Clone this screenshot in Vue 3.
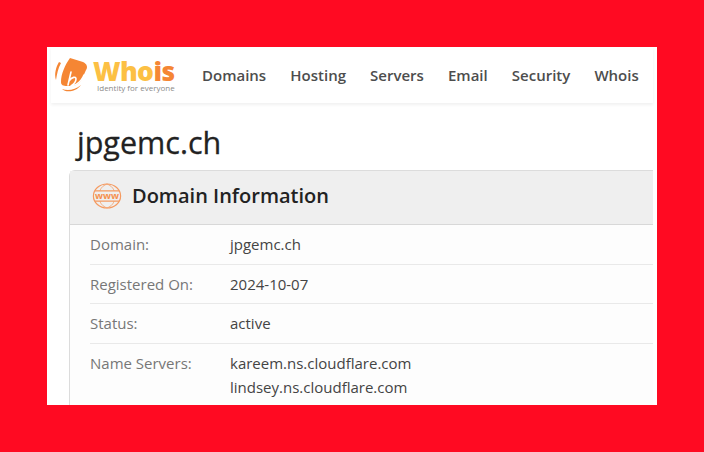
<template>
  <div class="page">
    <div class="shot">
      <header class="topbar">
        <div class="logo">
          <svg class="logo-mark" width="36" height="36" viewBox="0 0 36 36">
            <path d="M6 5 C3 10 1 17 3 23 C4 17 5 11 8 6 Z" fill="#f58634" />
            <path d="M17 1 L30 5 C34 7 35 10 33 13 L29 22 C26 28 20 30 14 29 C10 29 8 28 8 25 C8 17 12 8 17 1 Z" fill="#f58634" />
            <path d="M18 15 L15 28 M16 24 C19 20 23 19 23 22 C23 25 21 27 18 29 M31 18 C28 26 20 31 10 30" fill="none" stroke="#fff" stroke-width="1.6" stroke-linecap="round" />
            <path d="M9 32 C15 34 22 33 28 28 C23 35 13 36 9 32 Z" fill="#f58634" />
          </svg>
          <div class="logo-text">
            <div class="logo-name"><span class="who">Who</span><span class="is">is</span></div>
            <div class="logo-tag">Identity for everyone</div>
          </div>
        </div>
        <nav class="nav">
          <a v-for="item in navItems" :key="item">{{ item }}</a>
        </nav>
      </header>

      <h1 class="domain-title">jpgemc.ch</h1>

      <section class="card">
        <div class="card-head">
          <svg class="www" width="30" height="26" viewBox="0 0 30 26" fill="none" stroke="#f59a60" stroke-width="1.2">
            <ellipse cx="15" cy="13" rx="13.6" ry="12" />
            <path d="M3 7.8 H27 M3 18.2 H27" />
            <path d="M15 1 C10 3 8.5 6 8 7.8 M15 1 C20 3 21.5 6 22 7.8 M15 25 C10 23 8.5 20 8 18.2 M15 25 C20 23 21.5 20 22 18.2" stroke-width="0.8" />
            <text x="15" y="16" text-anchor="middle" textLength="24" lengthAdjust="spacingAndGlyphs" class="www-text">www</text>
          </svg>
          <h2>Domain Information</h2>
        </div>
        <div class="rows">
          <div v-for="row in rows" :key="row.label" class="row">
            <div class="label">{{ row.label }}</div>
            <div class="value">
              <div v-for="line in row.lines" :key="line">{{ line }}</div>
            </div>
          </div>
        </div>
      </section>
    </div>
  </div>
</template>

<script setup>
const navItems = ['Domains', 'Hosting', 'Servers', 'Email', 'Security', 'Whois'];

const rows = [
  { label: 'Domain:', lines: ['jpgemc.ch'] },
  { label: 'Registered On:', lines: ['2024-10-07'] },
  { label: 'Status:', lines: ['active'] },
  { label: 'Name Servers:', lines: ['kareem.ns.cloudflare.com', 'lindsey.ns.cloudflare.com'] }
];
</script>

<style>
html,
body {
  margin: 0;
  background: #ff0a22;
}
</style>

<style scoped>
.page {
  width: 704px;
  height: 452px;
  padding: 47px;
  box-sizing: border-box;
  background: #ff0a22;
  overflow: hidden;
  font-family: "Open Sans", "Noto Sans", sans-serif;
}

.shot {
  width: 610px;
  height: 358px;
  background: #fff;
  overflow: hidden;
  padding-right: 4px;
  box-sizing: border-box;
}

.topbar {
  display: flex;
  align-items: center;
  height: 56px;
  margin-left: 4px;
  background: #fff;
  box-shadow: 0 2px 3px rgba(0, 0, 0, 0.06);
}

.logo {
  display: flex;
  align-items: center;
  gap: 4px;
  width: 151px;
  padding-left: 2px;
  box-sizing: border-box;
}

.logo-mark {
  flex: none;
}

.logo-name {
  font-family: "Open Sans", sans-serif;
  font-weight: 800;
  font-size: 26.5px;
  line-height: 25px;
  letter-spacing: -0.6px;
}

.who,
.is {
  display: inline-block;
}

.who {
  color: #fcc044;
}

.is {
  color: #f58634;
}

.logo-tag {
  margin-left: 4px;
  font-size: 8px;
  line-height: 8px;
  color: #8a8a8a;
  white-space: nowrap;
}

.nav {
  display: flex;
  gap: 24.1px;
  font-size: 15px;
  font-weight: 600;
  color: #4d4d4d;
}

.domain-title {
  margin: 20px 0 0 30px;
  font-size: 30.5px;
  line-height: 38px;
  font-weight: 400;
  color: #222;
  -webkit-text-stroke: 0.3px #222;
}

.card {
  margin: 9px 0 0 22px;
  border: 1px solid #dcdcdc;
  border-right: none;
  border-bottom: none;
  border-radius: 6px 0 0 0;
  background: #fdfdfd;
}

.card-head {
  display: flex;
  align-items: center;
  gap: 10px;
  height: 54px;
  padding: 0 0 4px 22px;
  box-sizing: border-box;
  background: #efefef;
  border-bottom: 1px solid #d8d8d8;
}

.card-head h2 {
  margin: 0;
  font-size: 20px;
  font-weight: 600;
  color: #222;
}

.www-text {
  font-family: "Open Sans", sans-serif;
  font-size: 9px;
  font-weight: 700;
  fill: #f58f4e;
  stroke: none;
}

.rows {
  padding: 0 0 0 20px;
}

.row {
  display: flex;
  padding: 7px 0 7.7px;
  border-bottom: 1px solid #e9e9e9;
  font-size: 15px;
  line-height: 24px;
}

.row:last-child {
  border-bottom: none;
}

.label {
  width: 140px;
  flex: none;
  color: #777;
}

.value {
  color: #444;
}
</style>
